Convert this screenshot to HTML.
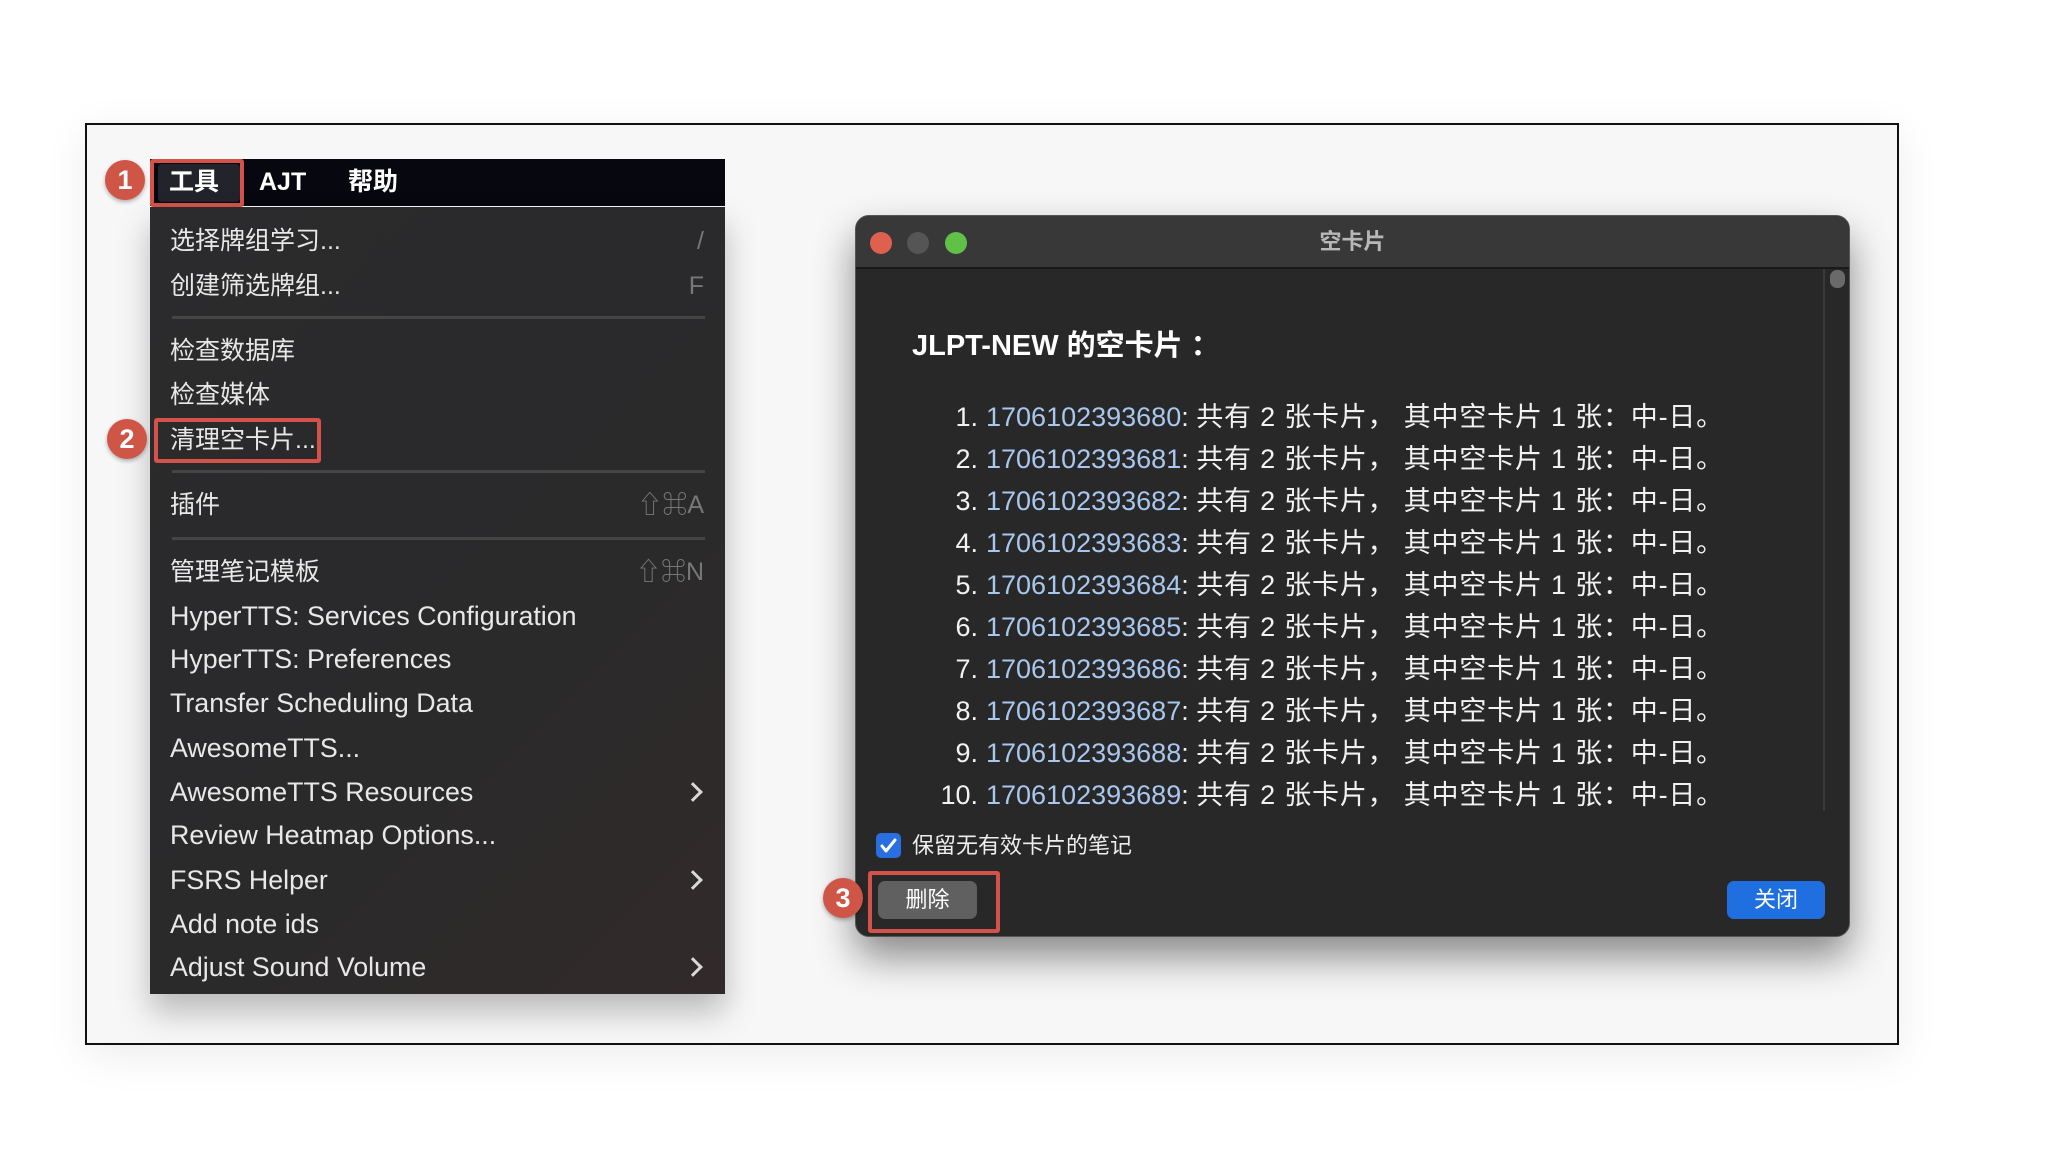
<!DOCTYPE html>
<html><head><meta charset="utf-8"><style>
*{margin:0;padding:0;box-sizing:border-box}
body{width:2046px;height:1168px;background:#fff;position:relative;overflow:hidden;font-family:"Liberation Sans","Noto Sans CJK SC",sans-serif}
.abs{position:absolute}
#frame{left:85px;top:123px;width:1814px;height:922px;border:2px solid #111;background:#f7f7f7;box-shadow:0 10px 40px rgba(0,0,0,0.08)}
#bar{left:150px;top:159px;width:575px;height:47px;background:#07070f}
.bt{top:166px;font-size:25px;color:#fff;line-height:32px;font-weight:bold}
#menu{left:150px;top:207px;width:575px;height:787px;background:linear-gradient(135deg,#2b2b2d 0%,#2a2a2b 60%,#322a2a 100%);box-shadow:0 18px 30px rgba(0,0,0,0.25)}
.mi{left:170px;font-size:25px;color:#e8e8e8;line-height:30px;white-space:nowrap}
.mi.l{font-size:26.8px}
.sc{font-size:25px;color:#777;line-height:30px;text-align:right;width:120px;left:584px}
.sep{left:172px;width:533px;height:3px;background:#454545}
.arr{left:686px;width:14px;height:14px;border-right:3px solid #d8d8d8;border-top:3px solid #d8d8d8;transform:rotate(45deg)}
.red{border:4px solid #d4524a;border-radius:3px}
.badge{width:40px;height:40px;border-radius:50%;background:#cf5547;color:#fff;font-weight:bold;font-size:27px;text-align:center;line-height:40px;box-shadow:0 2px 4px rgba(0,0,0,0.3)}
#dlg{left:855px;top:215px;width:995px;height:722px;background:#282828;border-radius:14px;border:1px solid #555;box-shadow:0 20px 40px rgba(0,0,0,0.45);overflow:hidden}
#tb{left:0;top:0;width:100%;height:53px;background:#383838;border-bottom:2px solid #1a1a1a}
.tl{width:22px;height:22px;border-radius:50%;top:16px}
.row{left:0;width:1000px;font-size:27px;line-height:34px;color:#f2f2f2;white-space:nowrap}
.row .n{display:inline-block;width:122px;text-align:right}
.row .id{color:#a8c7ee;margin-left:8px}
.row .c{font-size:27px;letter-spacing:0.8px}
.btn{height:38px;border-radius:7px;font-size:22px;line-height:38px;text-align:center;color:#fff}
</style></head><body>
<div id="frame" class="abs"></div>

<div id="bar" class="abs"></div>
<div class="abs" style="left:158px;top:164px;width:82px;height:38px;background:#23232c;border-radius:4px"></div>
<div class="abs bt" style="left:169px">工具</div>
<div class="abs bt" style="left:259px">AJT</div>
<div class="abs bt" style="left:348px">帮助</div>
<div class="abs red" style="left:150px;top:159px;width:94px;height:48px"></div>
<div class="abs badge" style="left:105px;top:160px">1</div>

<div id="menu" class="abs"></div>
<div class="abs mi" style="top:226px">选择牌组学习...</div><div class="abs sc" style="top:226px">/</div>
<div class="abs mi" style="top:271px">创建筛选牌组...</div><div class="abs sc" style="top:271px">F</div>
<div class="abs sep" style="top:316px"></div>
<div class="abs mi" style="top:336px">检查数据库</div>
<div class="abs mi" style="top:380px">检查媒体</div>
<div class="abs mi" style="top:425px">清理空卡片...</div>
<div class="abs red" style="left:154px;top:418px;width:167px;height:45px"></div>
<div class="abs badge" style="left:107px;top:419px">2</div>
<div class="abs sep" style="top:470px"></div>
<div class="abs mi" style="top:490px">插件</div><div class="abs sc" style="top:490px">⇧⌘A</div>
<div class="abs sep" style="top:537px"></div>
<div class="abs mi" style="top:557px">管理笔记模板</div><div class="abs sc" style="top:557px">⇧⌘N</div>
<div class="abs mi l" style="top:601px">HyperTTS: Services Configuration</div>
<div class="abs mi l" style="top:644px">HyperTTS: Preferences</div>
<div class="abs mi l" style="top:688px">Transfer Scheduling Data</div>
<div class="abs mi l" style="top:733px">AwesomeTTS...</div>
<div class="abs mi l" style="top:777px">AwesomeTTS Resources</div><div class="abs arr" style="top:785px"></div>
<div class="abs mi l" style="top:820px">Review Heatmap Options...</div>
<div class="abs mi l" style="top:865px">FSRS Helper</div><div class="abs arr" style="top:873px"></div>
<div class="abs mi l" style="top:909px">Add note ids</div>
<div class="abs mi l" style="top:952px">Adjust Sound Volume</div><div class="abs arr" style="top:960px"></div>

<div id="dlg" class="abs">
 <div id="tb" class="abs"></div>
 <div class="abs tl" style="left:14px;background:#e0604f"></div>
 <div class="abs tl" style="left:51px;background:#555"></div>
 <div class="abs tl" style="left:89px;background:#5fc146"></div>
 <div class="abs" style="left:0;width:993px;top:11px;text-align:center;font-size:22px;color:#b8b8b8;line-height:30px;font-weight:bold;">空卡片</div>
 <div class="abs" style="left:967px;top:53px;width:2px;height:542px;background:#3a3a3a"></div>
 <div class="abs" style="left:974px;top:54px;width:15px;height:18px;border-radius:7px;background:#6a6a6a"></div>
 <div class="abs" style="left:56px;top:112px;font-size:29px;font-weight:bold;color:#fff;line-height:36px">JLPT-NEW 的空卡片 ：</div>
 <div class="abs row" style="top:184px"><span class="n">1.</span><span class="id">1706102393680</span>: <span class="c">共有 2 张卡片， 其中空卡片 1 张：中-日。</span></div>
 <div class="abs row" style="top:226px"><span class="n">2.</span><span class="id">1706102393681</span>: <span class="c">共有 2 张卡片， 其中空卡片 1 张：中-日。</span></div>
 <div class="abs row" style="top:268px"><span class="n">3.</span><span class="id">1706102393682</span>: <span class="c">共有 2 张卡片， 其中空卡片 1 张：中-日。</span></div>
 <div class="abs row" style="top:310px"><span class="n">4.</span><span class="id">1706102393683</span>: <span class="c">共有 2 张卡片， 其中空卡片 1 张：中-日。</span></div>
 <div class="abs row" style="top:352px"><span class="n">5.</span><span class="id">1706102393684</span>: <span class="c">共有 2 张卡片， 其中空卡片 1 张：中-日。</span></div>
 <div class="abs row" style="top:394px"><span class="n">6.</span><span class="id">1706102393685</span>: <span class="c">共有 2 张卡片， 其中空卡片 1 张：中-日。</span></div>
 <div class="abs row" style="top:436px"><span class="n">7.</span><span class="id">1706102393686</span>: <span class="c">共有 2 张卡片， 其中空卡片 1 张：中-日。</span></div>
 <div class="abs row" style="top:478px"><span class="n">8.</span><span class="id">1706102393687</span>: <span class="c">共有 2 张卡片， 其中空卡片 1 张：中-日。</span></div>
 <div class="abs row" style="top:520px"><span class="n">9.</span><span class="id">1706102393688</span>: <span class="c">共有 2 张卡片， 其中空卡片 1 张：中-日。</span></div>
 <div class="abs row" style="top:562px"><span class="n">10.</span><span class="id">1706102393689</span>: <span class="c">共有 2 张卡片， 其中空卡片 1 张：中-日。</span></div>
 <div class="abs" style="left:20px;top:617px;width:25px;height:25px;border-radius:5px;background:#2a6fe0"><svg width="25" height="25" viewBox="0 0 25 25"><path d="M6 13l4 5 9-11" stroke="#fff" stroke-width="3" fill="none" stroke-linecap="round" stroke-linejoin="round"/></svg></div>
 <div class="abs" style="left:56px;top:615px;font-size:22px;color:#eee;line-height:30px">保留无有效卡片的笔记</div>
 <div class="abs btn" style="left:22px;top:665px;width:99px;background:#606060">删除</div>
 <div class="abs btn" style="left:871px;top:665px;width:98px;background:#1f6fe0">关闭</div>
</div>
<div class="abs red" style="left:868px;top:871px;width:132px;height:62px"></div>
<div class="abs badge" style="left:823px;top:878px">3</div>
</body></html>
